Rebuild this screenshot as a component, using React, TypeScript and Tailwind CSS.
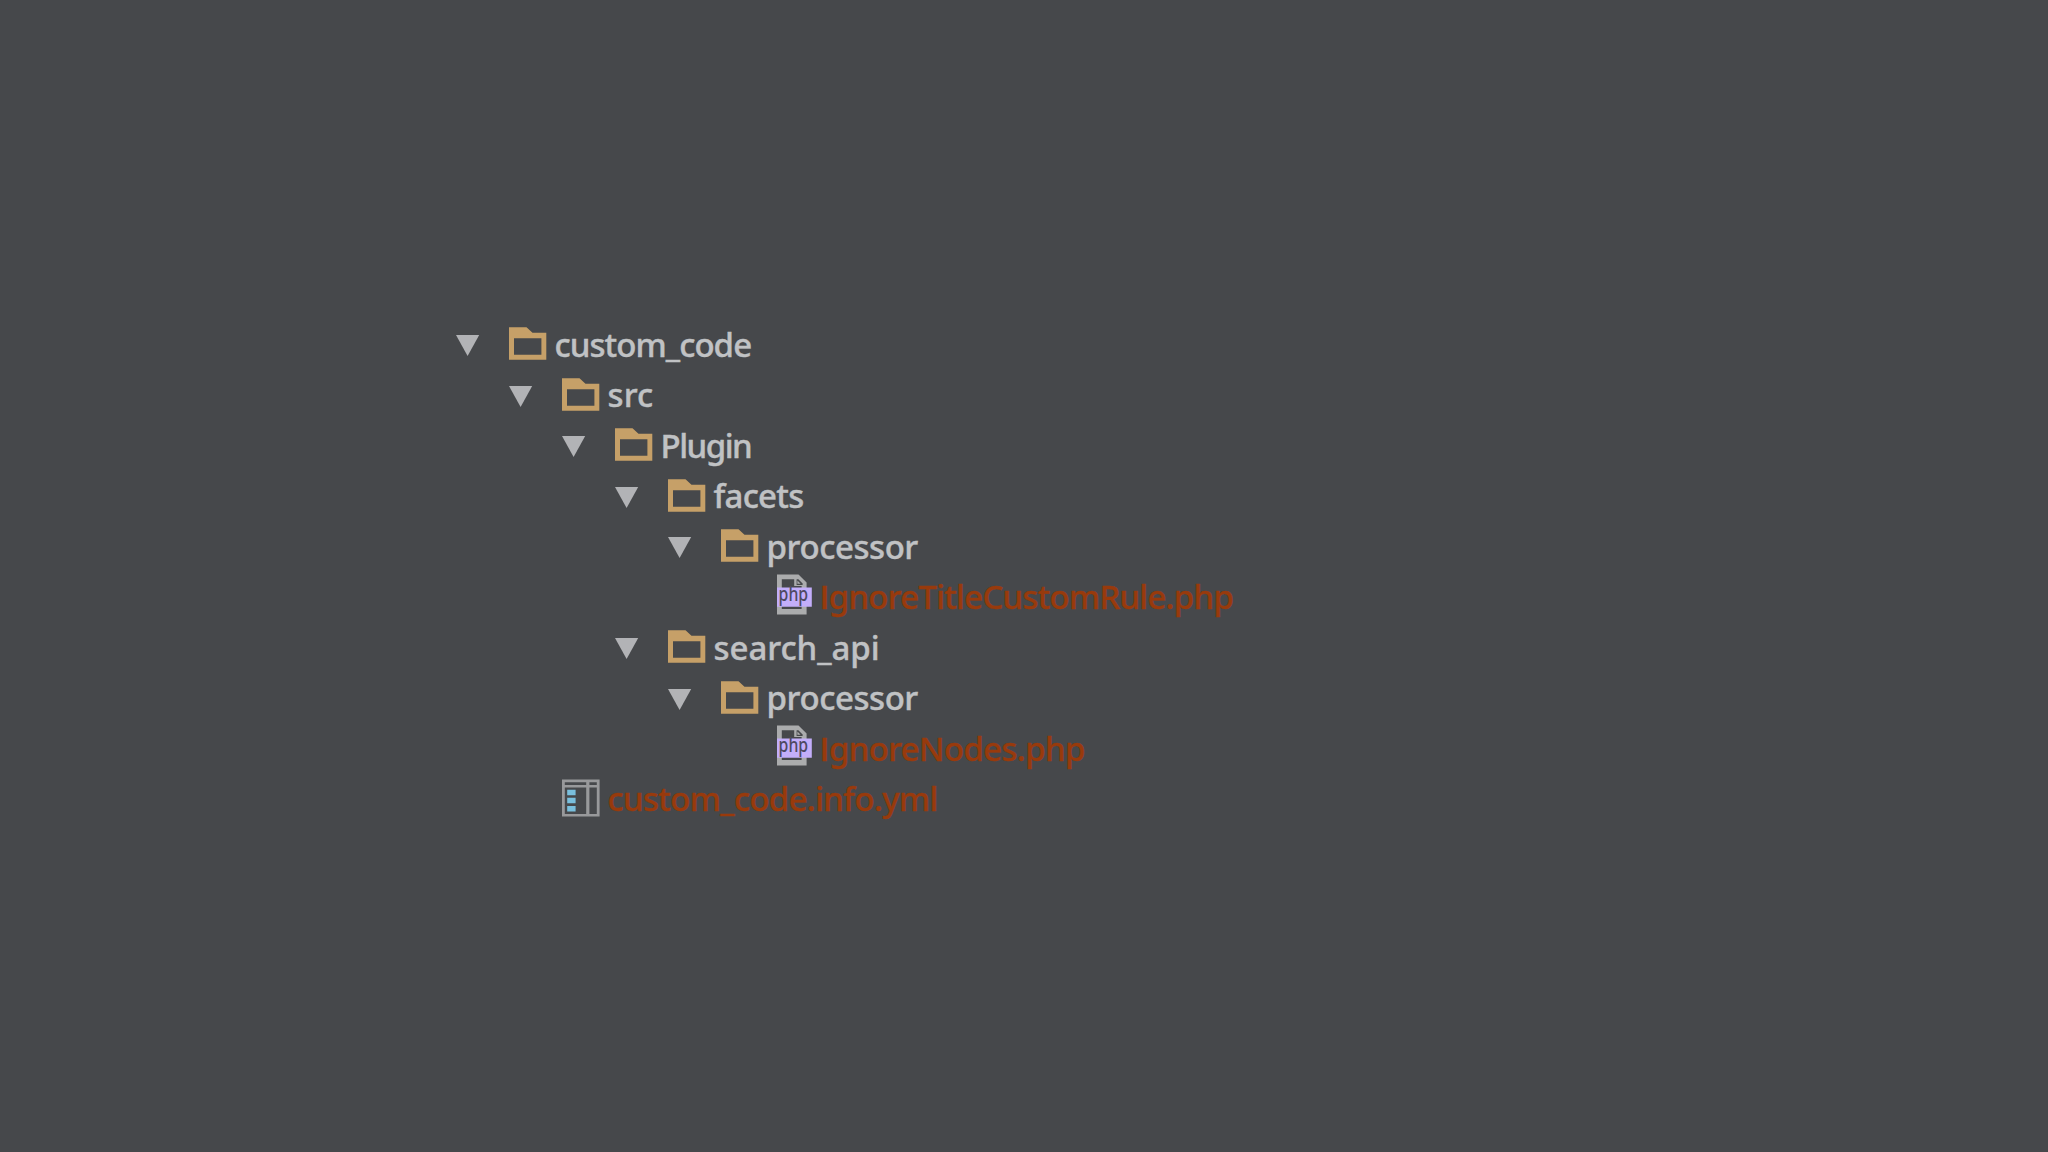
type Kind = 'folder' | 'php' | 'yml';

interface TreeRow {
  label: string;
  kind: Kind;
  indent: string;
  tracking: string;
}

const rows: TreeRow[] = [
  { label: 'custom_code', kind: 'folder', indent: 'pl-0', tracking: 'tracking-[-0.95px]' },
  { label: 'src', kind: 'folder', indent: 'pl-[53px]', tracking: 'tracking-[0.1px]' },
  { label: 'Plugin', kind: 'folder', indent: 'pl-[106px]', tracking: 'tracking-[-1.5px]' },
  { label: 'facets', kind: 'folder', indent: 'pl-[159px]', tracking: 'tracking-[-0.75px]' },
  { label: 'processor', kind: 'folder', indent: 'pl-[212px]', tracking: 'tracking-[-0.43px]' },
  { label: 'IgnoreTitleCustomRule.php', kind: 'php', indent: 'pl-[265px]', tracking: 'tracking-[-0.79px]' },
  { label: 'search_api', kind: 'folder', indent: 'pl-[159px]', tracking: 'tracking-[-0.05px]' },
  { label: 'processor', kind: 'folder', indent: 'pl-[212px]', tracking: 'tracking-[-0.43px]' },
  { label: 'IgnoreNodes.php', kind: 'php', indent: 'pl-[265px]', tracking: 'tracking-[-0.68px]' },
  { label: 'custom_code.info.yml', kind: 'yml', indent: 'pl-[53px]', tracking: 'tracking-[-0.7px]' },
];

function FolderIcon() {
  return (
    <path
      fillRule="evenodd"
      fill="#c6a068"
      d="M0 7.2H17.5L23.5 12.7H37.3V39.7H0ZM5 18.2V34.8H32.4V18.2Z"
    />
  );
}

function PhpIcon() {
  return (
    <>
      <path
        fillRule="evenodd"
        fill="#abacad"
        d="M3 1.4H24.5L32.6 9.4V41.4H3ZM7.8 6.2V36H27.6V13H20.2V6.2Z"
      />
      <path fill="#46484b" d="M22.6 6.2H24.4L28.6 10.4V12H22.6Z" />
      <path fill="#abacad" d="M23.4 7.6L26.6 10.8H23.4Z" />
      <path fill="#c3aefa" d="M3 14.6H37.8V33.8H3Z" />
      <text
        x="4.6"
        y="28.2"
        textLength="29.5"
        lengthAdjust="spacingAndGlyphs"
        fill="#4e4962"
        className="font-['Noto_Sans',sans-serif] text-[20px] font-medium"
      >
        php
      </text>
    </>
  );
}

function YmlIcon() {
  return (
    <>
      <path
        fillRule="evenodd"
        fill="#98999b"
        d="M0 4.6H37.6V41.6H0ZM2.8 7.2V10H24.2V7.2ZM27.4 7.2V10H34.8V7.2ZM2.8 12.6V39H24.2V12.6ZM27.4 12.6V39H34.8V12.6Z"
      />
      <path fill="#79bfdd" d="M5.2 14.8H13.6V20.2H5.2ZM5.2 22.8H13.6V28.2H5.2ZM5.2 31H13.6V36.4H5.2Z" />
    </>
  );
}

function RowIcon({ kind }: { kind: Kind }) {
  return (
    <svg className="w-11 h-[50.5px] shrink-0" viewBox="0 0 44 50.5">
      {kind === 'folder' && <FolderIcon />}
      {kind === 'php' && <PhpIcon />}
      {kind === 'yml' && <YmlIcon />}
    </svg>
  );
}

function Label({ text }: { text: string }) {
  if (!text.startsWith('I')) return <>{text}</>;
  return (
    <>
      <span className="font-['Open_Sans',sans-serif] font-semibold">I</span>
      {text.slice(1)}
    </>
  );
}

export default function App() {
  return (
    <main className="min-h-screen bg-[#46484b] pt-[320.25px] pl-[456px]">
      <ul className="flex flex-col">
        {rows.map((row, i) => (
          <li key={i} className={`flex items-center h-[50.5px] ${row.indent}`}>
            <div className="w-[53px] shrink-0">
              {row.kind === 'folder' && (
                <svg className="w-6 h-[21px]" viewBox="0 0 24 21">
                  <path d="M0 0H23.2L11.6 21Z" fill="#b2b3b6" />
                </svg>
              )}
            </div>
            <RowIcon kind={row.kind} />
            <span
              className={`ml-[1.5px] whitespace-nowrap font-['Noto_Sans',sans-serif] font-medium text-[33px] leading-[46px] pb-[2px] [-webkit-text-stroke:0.4px] ${row.tracking} ${
                row.kind === 'folder' ? 'text-[#c0c2c4]' : 'text-[#983a0c]'
              }`}
            >
              <Label text={row.label} />
            </span>
          </li>
        ))}
      </ul>
    </main>
  );
}
